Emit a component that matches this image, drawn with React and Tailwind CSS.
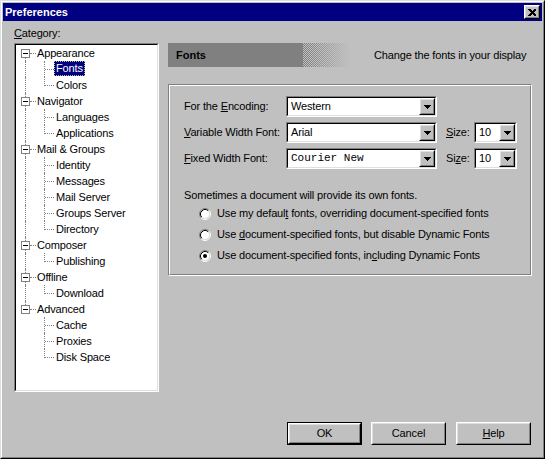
import React from "react";

const tree = [
  { label: "Appearance", children: ["Fonts", "Colors"] },
  { label: "Navigator", children: ["Languages", "Applications"] },
  { label: "Mail & Groups", children: ["Identity", "Messages", "Mail Server", "Groups Server", "Directory"] },
  { label: "Composer", children: ["Publishing"] },
  { label: "Offline", children: ["Download"] },
  { label: "Advanced", children: ["Cache", "Proxies", "Disk Space"] },
];

function Raised({ className = "", children }) {
  return (
    <div className={"border border-t-white border-l-white border-b-black border-r-black " + className}>
      <div className="w-full h-full border border-t-[#dfdfdf] border-l-[#dfdfdf] border-b-[#808080] border-r-[#808080] flex items-center justify-center">
        {children}
      </div>
    </div>
  );
}

function Arrow() {
  return (
    <svg width="7" height="4" viewBox="0 0 7 4" shapeRendering="crispEdges">
      <rect x="0" y="0" width="7" height="1" fill="#000" />
      <rect x="1" y="1" width="5" height="1" fill="#000" />
      <rect x="2" y="2" width="3" height="1" fill="#000" />
      <rect x="3" y="3" width="1" height="1" fill="#000" />
    </svg>
  );
}

function Select({ className, value, mono }) {
  return (
    <div className={"h-[21px] border border-t-[#808080] border-l-[#808080] border-b-white border-r-white " + className}>
      <div className="h-full border border-t-black border-l-black border-b-[#dfdfdf] border-r-[#dfdfdf] bg-white flex">
        <div
          className={
            "flex-1 pl-[3px] leading-[17px] whitespace-nowrap overflow-hidden " +
            (mono ? "[font-family:'Liberation_Mono',monospace] tracking-normal" : "")
          }
        >
          {value}
        </div>
        <Raised className="w-[16px] h-full bg-[#c0c0c0]">
          <Arrow />
        </Raised>
      </div>
    </div>
  );
}

function Radio({ checked }) {
  return (
    <svg width="12" height="12" viewBox="0 0 12 12" className="shrink-0">
      <circle cx="6" cy="6" r="4.5" fill="#fff" />
      <path d="M2.11 9.89 A5.5 5.5 0 0 1 9.89 2.11" fill="none" stroke="#808080" strokeWidth="1" />
      <path d="M9.89 2.11 A5.5 5.5 0 0 1 2.11 9.89" fill="none" stroke="#fff" strokeWidth="1" />
      <path d="M2.82 9.18 A4.5 4.5 0 0 1 9.18 2.82" fill="none" stroke="#000" strokeWidth="1" />
      <path d="M9.18 2.82 A4.5 4.5 0 0 1 2.82 9.18" fill="none" stroke="#dfdfdf" strokeWidth="1" />
      {checked && <circle cx="6" cy="6" r="2" fill="#000" />}
    </svg>
  );
}

function Tree() {
  const rows = [];
  tree.forEach((g, gi) => {
    const lastGroup = gi === tree.length - 1;
    rows.push(
      <div key={g.label} className="relative h-[16px]">
        {gi === 0 ? (
          <span className="absolute left-[9px] top-[8px] bottom-0 border-l border-dotted border-[#808080]" />
        ) : lastGroup ? (
          <span className="absolute left-[9px] top-0 h-[8px] border-l border-dotted border-[#808080]" />
        ) : (
          <span className="absolute left-[9px] top-0 bottom-0 border-l border-dotted border-[#808080]" />
        )}
        <span className="absolute left-[14px] top-[8px] w-[6px] border-t border-dotted border-[#808080]" />
        <span className="absolute left-[5px] top-[4px] w-[9px] h-[9px] border border-[#808080] bg-white flex items-center justify-center">
          <span className="w-[5px] h-px bg-black" />
        </span>
        <span className="absolute left-[21px] top-0 leading-[16px] whitespace-nowrap">{g.label}</span>
      </div>
    );
    g.children.forEach((c, ci) => {
      const lastChild = ci === g.children.length - 1;
      const selected = c === "Fonts";
      rows.push(
        <div key={g.label + c} className="relative h-[16px]">
          {!lastGroup && (
            <span className="absolute left-[9px] top-0 bottom-0 border-l border-dotted border-[#808080]" />
          )}
          {lastChild ? (
            <span className="absolute left-[28px] top-0 h-[9px] border-l border-dotted border-[#808080]" />
          ) : (
            <span className="absolute left-[28px] top-0 bottom-0 border-l border-dotted border-[#808080]" />
          )}
          <span className="absolute left-[29px] top-[8px] w-[9px] border-t border-dotted border-[#808080]" />
          {selected ? (
            <span className="absolute left-[38px] top-0 h-[15px] leading-[13px] px-px bg-[#000080] text-white border border-dotted border-[#c0c070] whitespace-nowrap">
              {c}
            </span>
          ) : (
            <span className="absolute left-[40px] top-0 leading-[16px] whitespace-nowrap">{c}</span>
          )}
        </div>
      );
    });
  });
  return <div className="flex flex-col">{rows}</div>;
}

export default function App() {
  return (
    <div className="w-[545px] h-[459px] bg-[#c0c0c0] border border-t-[#dfdfdf] border-l-[#dfdfdf] border-b-black border-r-black text-[11px] tracking-[-0.15px] text-black [font-family:'Liberation_Sans',Arial,sans-serif] overflow-hidden select-none">
      <div className="h-full border border-t-white border-l-white border-b-[#808080] border-r-[#808080] p-px flex flex-col">
        {/* Title bar */}
        <div className="h-[18px] bg-[#000080] flex items-center justify-between pl-[2px] pr-[2px] shrink-0">
          <span className="text-white font-bold leading-[18px] tracking-normal">Preferences</span>
          <Raised className="w-[16px] h-[14px] bg-[#c0c0c0]">
            <svg width="8" height="7" viewBox="0 0 8 7" shapeRendering="crispEdges">
              <path d="M0 0h2l2 2 2-2h2v1L5.5 3.5 8 6v1H6L4 5 2 7H0V6l2.5-2.5L0 1z" fill="#000" />
            </svg>
          </Raised>
        </div>

        {/* Body */}
        <div className="flex-1 flex flex-col">
          <div className="flex">
            {/* Left column */}
            <div className="ml-[11px] pt-[4px] flex flex-col">
              <div className="h-[16px] leading-[16px]">
                <u>C</u>ategory:
              </div>
              <div className="mt-[2px] w-[145px] h-[349px] border border-t-[#808080] border-l-[#808080] border-b-white border-r-white">
                <div className="w-full h-full border border-t-black border-l-black border-b-[#dfdfdf] border-r-[#dfdfdf] bg-white overflow-hidden">
                  <Tree />
                </div>
              </div>
            </div>

            {/* Right column */}
            <div className="ml-[9px] pt-[22px] w-[364px] flex flex-col">
              <div className="h-[24px] flex items-center">
                <div className="w-[182px] h-full flex">
                  <div className="w-[135px] h-full bg-[#808080] pl-[8px] flex items-center font-bold tracking-normal">Fonts</div>
                  <div className="w-[47px] h-full bg-[conic-gradient(#808080_25%,transparent_0_50%,#808080_0_75%,transparent_0)] bg-[length:2px_2px] [mask-image:linear-gradient(to_right,black_10%,transparent)]" />
                </div>
                <div className="ml-[24px] whitespace-nowrap">Change the fonts in your display</div>
              </div>

              {/* Group box */}
              <div className="mt-[17px] border border-t-[#808080] border-l-[#808080] border-b-white border-r-white">
                <div className="border border-t-white border-l-white border-b-[#808080] border-r-[#808080] pt-[10px] pl-[14px] pb-[8px]">
                  <div className="flex flex-col gap-[5px]">
                    <div className="flex items-center h-[21px]">
                      <div className="w-[102px] whitespace-nowrap">
                        For the <u>E</u>ncoding:
                      </div>
                      <Select className="w-[151px]" value="Western" />
                    </div>
                    <div className="flex items-center h-[21px]">
                      <div className="w-[102px] whitespace-nowrap">
                        <u>V</u>ariable Width Font:
                      </div>
                      <Select className="w-[151px]" value="Arial" />
                      <div className="ml-[9px] w-[28px]">
                        <u>S</u>ize:
                      </div>
                      <Select className="w-[43px]" value="10" />
                    </div>
                    <div className="flex items-center h-[21px]">
                      <div className="w-[102px] whitespace-nowrap">
                        <u>F</u>ixed Width Font:
                      </div>
                      <Select className="w-[151px]" value="Courier New" mono />
                      <div className="ml-[9px] w-[28px]">
                        Si<u>z</u>e:
                      </div>
                      <Select className="w-[43px]" value="10" />
                    </div>
                  </div>

                  <div className="mt-[18px] h-[16px] leading-[16px] whitespace-nowrap">
                    Sometimes a document will provide its own fonts.
                  </div>
                  <div className="pl-[15px] flex flex-col">
                    <div className="h-[21px] flex items-center">
                      <Radio />
                      <span className="ml-[6px] whitespace-nowrap">
                        Use my defaul<u>t</u> fonts, overriding document-specified fonts
                      </span>
                    </div>
                    <div className="h-[21px] flex items-center">
                      <Radio />
                      <span className="ml-[6px] whitespace-nowrap">
                        Use <u>d</u>ocument-specified fonts, but disable Dynamic Fonts
                      </span>
                    </div>
                    <div className="h-[21px] flex items-center">
                      <Radio checked />
                      <span className="ml-[6px] whitespace-nowrap">
                        Use document-specified fonts, in<u>c</u>luding Dynamic Fonts
                      </span>
                    </div>
                  </div>
                </div>
              </div>
            </div>
          </div>

          {/* Buttons */}
          <div className="mt-[30px] flex justify-end pr-[11px]">
            <div className="w-[75px] h-[23px] border border-black mr-[9px]">
              <Raised className="w-full h-full">OK</Raised>
            </div>
            <Raised className="w-[75px] h-[23px] mr-[10px]">Cancel</Raised>
            <Raised className="w-[75px] h-[23px]">
              <span>
                <u>H</u>elp
              </span>
            </Raised>
          </div>
        </div>
      </div>
    </div>
  );
}
